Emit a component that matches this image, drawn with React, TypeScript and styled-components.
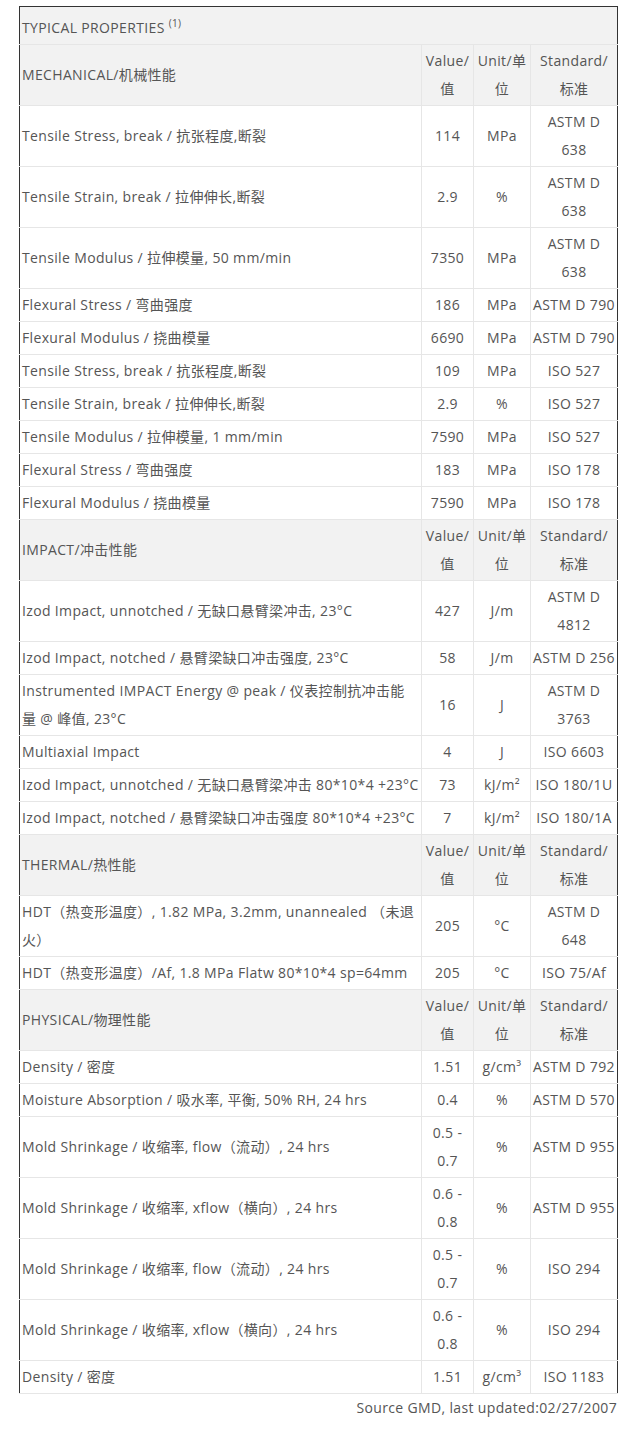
import React from "react";
import styled, { createGlobalStyle } from "styled-components";

const GlobalStyle = createGlobalStyle`
  html, body { margin: 0; padding: 0; background: #ffffff; }
  body {
    font-family: "Open Sans", "Noto Sans CJK SC", sans-serif;
    font-size: 14px;
    letter-spacing: 0.35px;
    color: #555555;
  }
`;

const Page = styled.div`
  padding: 6px 8px 0 19px;
  width: 598px;
`;

const Table = styled.table`
  width: 598px;
  border-collapse: collapse;
  table-layout: fixed;
  border: 1px solid #333333;
  line-height: 28px;
`;

const TitleCell = styled.td`
  background: #f2f2f2;
  padding: 7px 2px 2px;
  text-align: left;
  border-bottom: 1px solid #e6e6e6;
  white-space: nowrap;
`;

const Sup = styled.sup`
  font-size: 10px;
  line-height: 0;
`;

const HeadRow = styled.tr`
  background: #f2f2f2;
`;

const Cell = styled.td<{ $align?: "left" | "center" }>`
  padding: 2px 2px;
  text-align: ${(p) => p.$align ?? "center"};
  vertical-align: middle;
  border: 1px solid #e6e6e6;
  white-space: nowrap;
  &:first-child { border-left: 1px solid #333333; }
  &:last-child { border-right: 1px solid #333333; }
`;

const Footer = styled.div`
  text-align: right;
  line-height: 28px;
`;

type Row = [React.ReactNode, React.ReactNode, React.ReactNode, React.ReactNode];
type Section = { title: string; rows: Row[] };

const br = (a: string, b: string) => (
  <>
    {a}
    <br />
    {b}
  </>
);

const sections: Section[] = [
  {
    title: "MECHANICAL/机械性能",
    rows: [
      ["Tensile Stress, break / 抗张程度,断裂", "114", "MPa", br("ASTM D", "638")],
      ["Tensile Strain, break / 拉伸伸长,断裂", "2.9", "%", br("ASTM D", "638")],
      ["Tensile Modulus / 拉伸模量, 50 mm/min", "7350", "MPa", br("ASTM D", "638")],
      ["Flexural Stress / 弯曲强度", "186", "MPa", "ASTM D 790"],
      ["Flexural Modulus / 挠曲模量", "6690", "MPa", "ASTM D 790"],
      ["Tensile Stress, break / 抗张程度,断裂", "109", "MPa", "ISO 527"],
      ["Tensile Strain, break / 拉伸伸长,断裂", "2.9", "%", "ISO 527"],
      ["Tensile Modulus / 拉伸模量, 1 mm/min", "7590", "MPa", "ISO 527"],
      ["Flexural Stress / 弯曲强度", "183", "MPa", "ISO 178"],
      ["Flexural Modulus / 挠曲模量", "7590", "MPa", "ISO 178"],
    ],
  },
  {
    title: "IMPACT/冲击性能",
    rows: [
      ["Izod Impact, unnotched / 无缺口悬臂梁冲击, 23°C", "427", "J/m", br("ASTM D", "4812")],
      ["Izod Impact, notched / 悬臂梁缺口冲击强度, 23°C", "58", "J/m", "ASTM D 256"],
      [
        br("Instrumented IMPACT Energy @ peak / 仪表控制抗冲击能", "量 @ 峰值, 23°C"),
        "16",
        "J",
        br("ASTM D", "3763"),
      ],
      ["Multiaxial Impact", "4", "J", "ISO 6603"],
      ["Izod Impact, unnotched / 无缺口悬臂梁冲击 80*10*4 +23°C", "73", "kJ/m²", "ISO 180/1U"],
      ["Izod Impact, notched / 悬臂梁缺口冲击强度 80*10*4 +23°C", "7", "kJ/m²", "ISO 180/1A"],
    ],
  },
  {
    title: "THERMAL/热性能",
    rows: [
      [
        br("HDT（热变形温度）, 1.82 MPa, 3.2mm, unannealed （未退", "火）"),
        "205",
        "°C",
        br("ASTM D", "648"),
      ],
      ["HDT（热变形温度）/Af, 1.8 MPa Flatw 80*10*4 sp=64mm", "205", "°C", "ISO 75/Af"],
    ],
  },
  {
    title: "PHYSICAL/物理性能",
    rows: [
      ["Density / 密度", "1.51", "g/cm³", "ASTM D 792"],
      ["Moisture Absorption / 吸水率, 平衡, 50% RH, 24 hrs", "0.4", "%", "ASTM D 570"],
      ["Mold Shrinkage / 收缩率, flow（流动）, 24 hrs", br("0.5 -", "0.7"), "%", "ASTM D 955"],
      ["Mold Shrinkage / 收缩率, xflow（横向）, 24 hrs", br("0.6 -", "0.8"), "%", "ASTM D 955"],
      ["Mold Shrinkage / 收缩率, flow（流动）, 24 hrs", br("0.5 -", "0.7"), "%", "ISO 294"],
      ["Mold Shrinkage / 收缩率, xflow（横向）, 24 hrs", br("0.6 -", "0.8"), "%", "ISO 294"],
      ["Density / 密度", "1.51", "g/cm³", "ISO 1183"],
    ],
  },
];

export default function App() {
  return (
    <>
      <GlobalStyle />
      <Page>
        <Table>
          <colgroup>
            <col style={{ width: 402 }} />
            <col style={{ width: 52 }} />
            <col style={{ width: 57 }} />
            <col style={{ width: 87 }} />
          </colgroup>
          <tbody>
            <tr>
              <TitleCell colSpan={4}>
                TYPICAL PROPERTIES <Sup>(1)</Sup>
              </TitleCell>
            </tr>
            {sections.map((s) => (
              <React.Fragment key={s.title}>
                <HeadRow>
                  <Cell $align="left">{s.title}</Cell>
                  <Cell>{br("Value/", "值")}</Cell>
                  <Cell>{br("Unit/单", "位")}</Cell>
                  <Cell>{br("Standard/", "标准")}</Cell>
                </HeadRow>
                {s.rows.map((r, i) => (
                  <tr key={i}>
                    <Cell $align="left">{r[0]}</Cell>
                    <Cell>{r[1]}</Cell>
                    <Cell>{r[2]}</Cell>
                    <Cell>{r[3]}</Cell>
                  </tr>
                ))}
              </React.Fragment>
            ))}
          </tbody>
        </Table>
        <Footer>Source GMD, last updated:02/27/2007</Footer>
      </Page>
    </>
  );
}
